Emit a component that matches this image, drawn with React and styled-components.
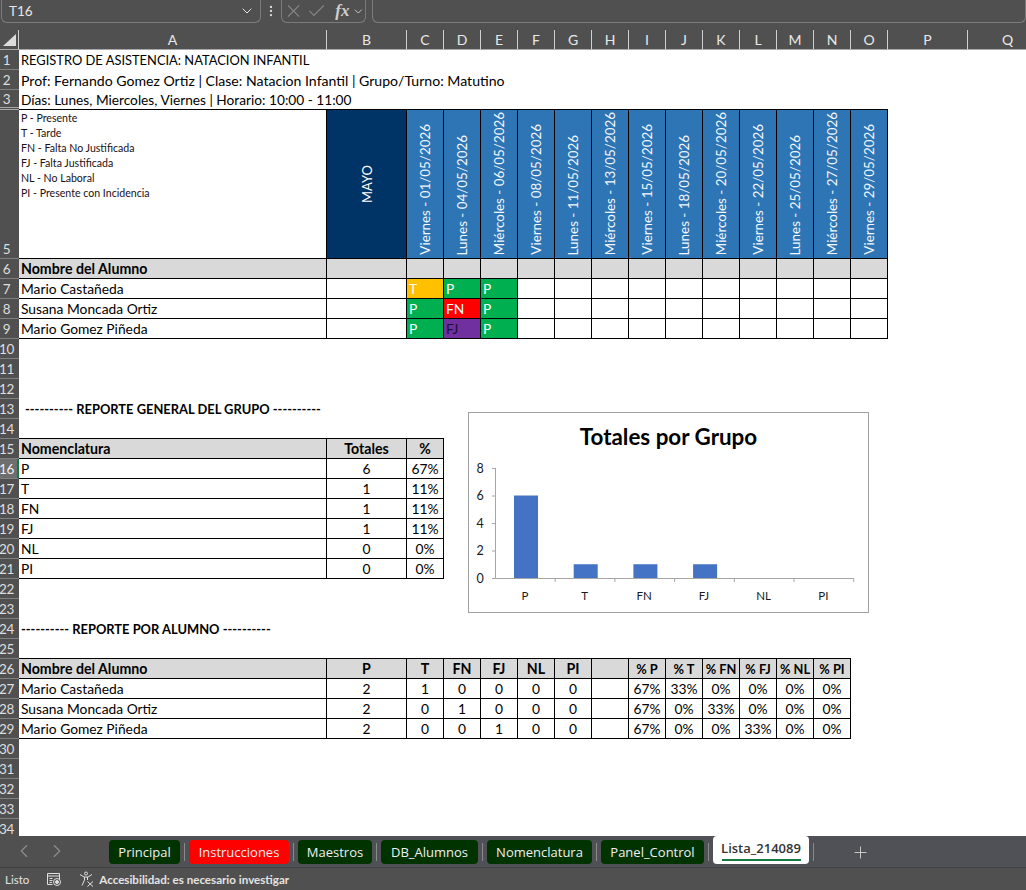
import { Fragment } from "react";
import styled, { createGlobalStyle } from "styled-components";
import { Check, ChevronDown, ChevronLeft, ChevronRight, EllipsisVertical, Plus, X } from "lucide-react";

const CELL_FONT = `"Lato", "Liberation Sans", sans-serif`;
const UI_FONT = `"Open Sans", "Noto Sans", sans-serif`;

const COLUMNS = [
  ["A", 308], ["B", 80], ["C", 37], ["D", 37], ["E", 37], ["F", 37], ["G", 37], ["H", 37], ["I", 37],
  ["J", 37], ["K", 37], ["L", 37], ["M", 37], ["N", 37], ["O", 37], ["P", 80], ["Q", 80],
];

const LEGEND = [
  "P - Presente",
  "T - Tarde",
  "FN - Falta No Justificada",
  "FJ - Falta Justificada",
  "NL - No Laboral",
  "PI - Presente con Incidencia",
];

const DATES = [
  "Viernes - 01/05/2026", "Lunes - 04/05/2026", "Miércoles - 06/05/2026", "Viernes - 08/05/2026",
  "Lunes - 11/05/2026", "Miércoles - 13/05/2026", "Viernes - 15/05/2026", "Lunes - 18/05/2026",
  "Miércoles - 20/05/2026", "Viernes - 22/05/2026", "Lunes - 25/05/2026", "Miércoles - 27/05/2026",
  "Viernes - 29/05/2026",
];

const ATTENDANCE = [
  ["Mario Castañeda", ["T", "P", "P"]],
  ["Susana Moncada Ortiz", ["P", "FN", "P"]],
  ["Mario Gomez Piñeda", ["P", "FJ", "P"]],
];

const MARK_COLORS = {
  T: { bg: "#ffc000", fg: "#ffffff" },
  P: { bg: "#00b050", fg: "#ffffff" },
  FN: { bg: "#ff0000", fg: "#ffffff" },
  FJ: { bg: "#7030a0", fg: "#1c1030" },
};

const TOTALS = [
  ["P", 6, "67%"],
  ["T", 1, "11%"],
  ["FN", 1, "11%"],
  ["FJ", 1, "11%"],
  ["NL", 0, "0%"],
  ["PI", 0, "0%"],
];

const STUDENT_HEAD = ["P", "T", "FN", "FJ", "NL", "PI", "", "% P", "% T", "% FN", "% FJ", "% NL", "% PI"];
const STUDENTS = [
  ["Mario Castañeda", [2, 1, 0, 0, 0, 0, "", "67%", "33%", "0%", "0%", "0%", "0%"]],
  ["Susana Moncada Ortiz", [2, 0, 1, 0, 0, 0, "", "67%", "0%", "33%", "0%", "0%", "0%"]],
  ["Mario Gomez Piñeda", [2, 0, 0, 1, 0, 0, "", "67%", "0%", "0%", "33%", "0%", "0%"]],
];

const TABS = [
  { name: "Principal", width: 71, color: "#003300" },
  { name: "Instrucciones", width: 100, color: "#ff0000" },
  { name: "Maestros", width: 74, color: "#003300" },
  { name: "DB_Alumnos", width: 97, color: "#003300" },
  { name: "Nomenclatura", width: 105, color: "#003300" },
  { name: "Panel_Control", width: 103, color: "#003300" },
  { name: "Lista_214089", width: 96, active: true },
];

const CHART = [
  { label: "P", value: 6 },
  { label: "T", value: 1 },
  { label: "FN", value: 1 },
  { label: "FJ", value: 1 },
  { label: "NL", value: 0 },
  { label: "PI", value: 0 },
];

const GlobalStyle = createGlobalStyle`
  html, body {
    margin: 0;
    padding: 0;
    background: #505050;
  }
  * {
    box-sizing: border-box;
  }
`;

const Window = styled.div`
  width: 1026px;
  height: 890px;
  display: flex;
  flex-direction: column;
  overflow: hidden;
  background: #505050;
  font-family: ${CELL_FONT};
`;

/* formula bar */
const FormulaBar = styled.div`
  flex: 0 0 30px;
  display: flex;
  align-items: flex-start;
  color: #e6e6e6;
`;

const BarBox = styled.div`
  height: 23px;
  width: ${(props) => props.$width || "auto"};
  flex: ${(props) => (props.$grow ? "1" : "0 0 auto")};
  margin-left: ${(props) => props.$left || 0}px;
  display: flex;
  align-items: center;
  border: 1px solid #7c7c7c;
  border-top: none;
  border-radius: 0 0 6px 6px;
`;

const NameValue = styled.span`
  flex: 1;
  padding-left: 7px;
  font-size: 13.5px;
`;

const NameChevron = styled(ChevronDown)`
  margin-right: 5px;
`;

const BarDots = styled.div`
  width: 20px;
  height: 21px;
  display: flex;
  align-items: center;
  justify-content: center;
  color: #d8d8d8;
`;

const CancelIcon = styled(X)`
  margin-left: 1px;
  color: #8c8c8c;
`;

const ConfirmIcon = styled(Check)`
  margin-left: 2px;
  color: #8c8c8c;
`;

const FxMark = styled.span`
  font-family: "Liberation Serif", serif;
  font-style: italic;
  font-weight: bold;
  font-size: 17px;
  color: #cfcfcf;
  margin-left: 8px;
  margin-right: 3px;
`;

/* sheet grid */
const RowGrid = styled.div`
  display: grid;
  grid-template-columns: 19px ${COLUMNS.map((c) => `${c[1]}px`).join(" ")};
  grid-auto-rows: ${(props) => props.$height}px;
  height: ${(props) => props.$height}px;
  flex: 0 0 auto;
`;

const Corner = styled.div`
  border-right: 1px solid #cfcfcf;
  border-bottom: 1px solid #a8a8a8;
`;

const CornerMark = styled.svg`
  display: block;
`;

const ColumnHead = styled.div`
  display: flex;
  align-items: center;
  justify-content: center;
  color: #e8e8e8;
  font-size: 14px;
  border-right: 1px solid #cfcfcf;
  border-bottom: 1px solid #a8a8a8;
`;

const Sheet = styled.div`
  position: relative;
  flex: 1 1 0;
  min-height: 0;
  overflow: hidden;
  background: #ffffff;
`;

const RowHead = styled.div`
  display: flex;
  align-items: ${(props) => (props.$tall ? "flex-end" : "center")};
  justify-content: center;
  padding-right: ${(props) => (props.$selected ? 4 : 6)}px;
  padding-bottom: ${(props) => (props.$tall ? "1px" : "0")};
  background: ${(props) => (props.$selected ? "#6e6e6e" : "#505050")};
  color: ${(props) => (props.$selected ? "#f0f0f0" : "#dedede")};
  font-size: 13.5px;
  letter-spacing: -0.4px;
  white-space: nowrap;
  border-bottom: ${(props) => (props.$hiddenNext ? "3px double #a8a8a8" : "1px solid #808080")};
  border-right: ${(props) => (props.$selected ? "2px solid #107c41" : "0")};
`;

const Cell = styled.div`
  display: flex;
  align-items: center;
  justify-content: ${(props) => (props.$center ? "center" : "flex-start")};
  padding-left: ${(props) => (props.$center ? 0 : 2)}px;
  font-size: ${(props) => props.$size || (props.$bold ? 14.2 : 13.8)}px;
  font-weight: ${(props) => (props.$bold ? 700 : 400)};
  color: ${(props) => props.$color || "#000000"};
  background: ${(props) => props.$bg || "transparent"};
  white-space: nowrap;
  min-width: 0;
  border-right: ${(props) => (props.$box ? "1px solid #000" : "0")};
  border-bottom: ${(props) => (props.$box || props.$edge ? "1px solid #000" : "0")};
`;

const ReportTitle = styled(Cell)`
  padding-left: ${(props) => props.$indent}px;
  font-size: 12.9px;
  font-weight: 700;
`;

const LegendCell = styled.div`
  padding: 1px 0 0 2px;
  font-size: 10.6px;
  line-height: 15px;
  color: #1a1016;
  border-right: 1px solid #000;
  border-bottom: 1px solid #000;
`;

const LegendLine = styled.div`
  white-space: nowrap;
`;

const MonthCell = styled.div`
  display: flex;
  align-items: center;
  justify-content: center;
  background: #003366;
  color: #ffffff;
  font-size: 13px;
  border-right: 1px solid #000;
  border-bottom: 1px solid #000;
`;

const DateCell = styled.div`
  display: flex;
  align-items: center;
  justify-content: flex-start;
  flex-direction: column-reverse;
  padding-bottom: 3px;
  background: #2e75b6;
  color: #f4f8fc;
  font-size: 13.4px;
  border-right: 1px solid #000;
  border-bottom: 1px solid #000;
`;

const Rotated = styled.span`
  writing-mode: vertical-rl;
  transform: rotate(180deg);
  white-space: nowrap;
`;

/* chart */
const ChartPanel = styled.div`
  position: absolute;
  left: 468px;
  top: 362px;
  width: 401px;
  height: 201px;
  display: flex;
  flex-direction: column;
  background: #ffffff;
  border: 1px solid #a0a0a0;
`;

const ChartTitle = styled.div`
  flex: 0 0 46px;
  display: flex;
  align-items: center;
  justify-content: center;
  font-size: 22.4px;
  font-weight: 700;
  color: #000000;
`;

const AxisLabel = styled.text`
  font-family: ${CELL_FONT};
  font-size: ${(props) => props.$size}px;
  fill: #1a1a1a;
`;

/* sheet tabs */
const TabBar = styled.div`
  flex: 0 0 32px;
  display: flex;
  align-items: flex-start;
  background: #505157;
  border-bottom: 1px solid #404040;
`;

const TabNav = styled.div`
  flex: 0 0 109px;
  height: 31px;
  display: flex;
  align-items: center;
  gap: 11px;
  padding: 0 0 2px 13px;
  color: #8e8e8e;
  background: #505050;
`;

const TabList = styled.div`
  display: flex;
  align-items: flex-start;
  padding-top: 4px;
`;

const Tab = styled.div`
  width: ${(props) => props.$width}px;
  height: ${(props) => (props.$active ? 28 : 24)}px;
  margin-top: ${(props) => (props.$active ? -4 : 0)}px;
  position: relative;
  display: flex;
  align-items: ${(props) => (props.$active ? "flex-start" : "center")};
  justify-content: center;
  padding-top: ${(props) => (props.$active ? 3 : 0)}px;
  border-radius: 4px;
  background: ${(props) => (props.$active ? "#ffffff" : props.$color)};
  color: ${(props) => (props.$active ? "#333333" : "#f0f0f0")};
  font-family: ${UI_FONT};
  font-size: 13px;
  font-weight: ${(props) => (props.$active ? 600 : 400)};
  white-space: nowrap;
`;

const TabUnderline = styled.span`
  position: absolute;
  left: 9px;
  right: 8px;
  bottom: 3px;
  height: 2px;
  background: #107c41;
`;

const TabDivider = styled.div`
  width: 1px;
  height: 18px;
  margin: 3px 4px 0;
  background: #8a8a8a;
`;

const AddSheet = styled.div`
  margin-left: 33px;
  height: 24px;
  display: flex;
  align-items: center;
  color: #d8d8d8;
`;

/* status bar */
const StatusBar = styled.div`
  flex: 0 0 22px;
  display: flex;
  align-items: center;
  padding-left: 5px;
  color: #e4e4e4;
  font-family: ${CELL_FONT};
  font-size: 11.5px;
`;

const StatusIcon = styled.span`
  display: flex;
  margin-left: ${(props) => props.$left}px;
`;

const StatusStrong = styled.span`
  margin-left: 4px;
  font-weight: 700;
  font-size: 11.6px;
`;

function SheetRow({ n, height = 20, selected, hiddenNext, tall, children }) {
  return (
    <RowGrid $height={height}>
      <RowHead $selected={selected} $hiddenNext={hiddenNext} $tall={tall}>{n}</RowHead>
      {children}
    </RowGrid>
  );
}

function blanks(from, to) {
  const rows = [];
  for (let n = from; n <= to; n++) rows.push(<SheetRow key={n} n={n} />);
  return rows;
}

function edges(count) {
  return Array.from({ length: count }, (_, i) => <Cell key={i} $edge />);
}

function MacroIcon() {
  return (
    <svg width="16" height="16" viewBox="0 0 16 16" fill="none" stroke="#e0e0e0" strokeWidth="1">
      <path d="M1.5 2.5h12v6M1.5 2.5v11h5M1.5 5h12" />
      <path d="M3.5 7.5h3M3.5 9.5h3M3.5 11.5h2.5" />
      <circle cx="11" cy="11" r="3.5" />
      <circle cx="11" cy="11" r="1.5" fill="#e0e0e0" />
    </svg>
  );
}

function AccessibilityIcon() {
  return (
    <svg width="16" height="16" viewBox="0 0 16 16" fill="none" stroke="#e0e0e0" strokeWidth="1">
      <circle cx="7" cy="2.5" r="1.5" />
      <path d="M1 3.5l4 2.500h4l4-2.500M5.500 6v3L3 14.500M8.500 6v3" />
      <path d="M8.500 10.500l5.500 5M14 10.500l-5.500 5" />
    </svg>
  );
}

function TotalsChart() {
  const baseY = 578;
  const topY = 468;
  const left = 495;
  const slot = 59.7;
  const unit = (baseY - topY) / 8;
  return (
    <ChartPanel>
      <ChartTitle>Totales por Grupo</ChartTitle>
      <svg width="399" height="153" viewBox="469 459 399 153">
        {[0, 2, 4, 6, 8].map((v) => (
          <g key={v}>
            <line x1={left - 3} x2={left} y1={baseY - v * unit + 0.5} y2={baseY - v * unit + 0.5} stroke="#a6a6a6" />
            <AxisLabel $size={12.5} x={480} y={baseY - v * unit + 4.5} textAnchor="middle">{v}</AxisLabel>
          </g>
        ))}
        <line x1={left + 0.5} x2={left + 0.5} y1={topY} y2={baseY} stroke="#a6a6a6" />
        <line x1={left} x2={left + slot * 6} y1={baseY + 0.5} y2={baseY + 0.5} stroke="#a6a6a6" />
        {CHART.map((d, i) => (
          <g key={d.label}>
            <line x1={left + slot * (i + 1) + 0.5} x2={left + slot * (i + 1) + 0.5} y1={baseY} y2={baseY + 4} stroke="#a6a6a6" />
            {d.value > 0 && (
              <rect x={left + 19 + slot * i} y={baseY - d.value * unit} width="24" height={d.value * unit} fill="#4472c4" />
            )}
            <AxisLabel $size={11.5} x={left + slot * (i + 0.5)} y={600} textAnchor="middle">{d.label}</AxisLabel>
          </g>
        ))}
      </svg>
    </ChartPanel>
  );
}

export default function App() {
  return (
    <Window>
      <GlobalStyle />
      <FormulaBar>
        <BarBox $width="260px" $left={1}>
          <NameValue>T16</NameValue>
          <NameChevron size={16} strokeWidth={1.5} />
        </BarBox>
        <BarDots><EllipsisVertical size={14} strokeWidth={2} /></BarDots>
        <BarBox $width="85px">
          <CancelIcon size={22} strokeWidth={1.2} />
          <ConfirmIcon size={22} strokeWidth={1.2} />
          <FxMark>fx</FxMark>
          <ChevronDown size={13} strokeWidth={1.5} />
        </BarBox>
        <BarBox $grow $left={6} />
      </FormulaBar>

      <RowGrid $height={20}>
        <Corner>
          <CornerMark width="18" height="19" viewBox="0 0 18 19">
            <polygon points="3,16 16,16 16,4" fill="#dcdcdc" />
          </CornerMark>
        </Corner>
        {COLUMNS.map((c) => (
          <ColumnHead key={c[0]}>{c[0]}</ColumnHead>
        ))}
      </RowGrid>

      <Sheet>
        <SheetRow n={1}>
          <Cell $size={12.9}>REGISTRO DE ASISTENCIA: NATACION INFANTIL</Cell>
        </SheetRow>
        <SheetRow n={2}>
          <Cell $size={14.1}>Prof: Fernando Gomez Ortiz | Clase: Natacion Infantil | Grupo/Turno: Matutino</Cell>
        </SheetRow>
        <SheetRow n={3} hiddenNext>
          <Cell $edge $size={13.7}>Días: Lunes, Miercoles, Viernes | Horario: 10:00 - 11:00</Cell>
          {edges(14)}
        </SheetRow>
        <SheetRow n={5} height={149} tall>
          <LegendCell>
            {LEGEND.map((line) => (
              <LegendLine key={line}>{line}</LegendLine>
            ))}
          </LegendCell>
          <MonthCell><Rotated>MAYO</Rotated></MonthCell>
          {DATES.map((d) => (
            <DateCell key={d}><Rotated>{d}</Rotated></DateCell>
          ))}
        </SheetRow>
        <SheetRow n={6}>
          <Cell $box $bold $bg="#d9d9d9">Nombre del Alumno</Cell>
          <Cell $box $bg="#d9d9d9" />
          {DATES.map((d) => (
            <Cell key={d} $box $bg="#d9d9d9" />
          ))}
        </SheetRow>
        {ATTENDANCE.map(([name, marks], r) => (
          <SheetRow key={name} n={7 + r}>
            <Cell $box>{name}</Cell>
            <Cell $box />
            {DATES.map((d, i) => {
              const mark = marks[i];
              const tone = MARK_COLORS[mark];
              return (
                <Cell key={d} $box $bg={tone && tone.bg} $color={tone && tone.fg}>{mark}</Cell>
              );
            })}
          </SheetRow>
        ))}
        {blanks(10, 12)}
        <SheetRow n={13}>
          <ReportTitle $indent={6}>---------- REPORTE GENERAL DEL GRUPO ----------</ReportTitle>
        </SheetRow>
        <SheetRow n={14}>{edges(3)}</SheetRow>
        <SheetRow n={15}>
          <Cell $box $bold $bg="#d9d9d9">Nomenclatura</Cell>
          <Cell $box $bold $center $bg="#d9d9d9">Totales</Cell>
          <Cell $box $bold $center $bg="#d9d9d9">%</Cell>
        </SheetRow>
        {TOTALS.map(([code, total, pct], r) => (
          <SheetRow key={code} n={16 + r} selected={r === 0}>
            <Cell $box>{code}</Cell>
            <Cell $box $center>{total}</Cell>
            <Cell $box $center>{pct}</Cell>
          </SheetRow>
        ))}
        {blanks(22, 23)}
        <SheetRow n={24}>
          <ReportTitle $indent={2}>---------- REPORTE POR ALUMNO ----------</ReportTitle>
        </SheetRow>
        <SheetRow n={25}>{edges(14)}</SheetRow>
        <SheetRow n={26}>
          <Cell $box $bold $bg="#d9d9d9">Nombre del Alumno</Cell>
          {STUDENT_HEAD.map((h, i) => (
            <Cell key={i} $box $bold $center $bg="#d9d9d9" $size={i > 6 ? 12.8 : 14.2}>{h}</Cell>
          ))}
        </SheetRow>
        {STUDENTS.map(([name, values], r) => (
          <SheetRow key={name} n={27 + r}>
            <Cell $box>{name}</Cell>
            {values.map((v, i) => (
              <Cell key={i} $box $center>{v}</Cell>
            ))}
          </SheetRow>
        ))}
        {blanks(30, 34)}
        <TotalsChart />
      </Sheet>

      <TabBar>
        <TabNav>
          <ChevronLeft size={22} strokeWidth={1.25} />
          <ChevronRight size={22} strokeWidth={1.25} />
        </TabNav>
        <TabList>
          {TABS.map((t) => (
            <Fragment key={t.name}>
              <Tab $width={t.width} $color={t.color} $active={t.active}>
                {t.name}
                {t.active && <TabUnderline />}
              </Tab>
              <TabDivider />
            </Fragment>
          ))}
          <AddSheet><Plus size={19} strokeWidth={1.1} /></AddSheet>
        </TabList>
      </TabBar>
      <StatusBar>
        Listo
        <StatusIcon $left={17}><MacroIcon /></StatusIcon>
        <StatusIcon $left={17}><AccessibilityIcon /></StatusIcon>
        <StatusStrong>Accesibilidad: es necesario investigar</StatusStrong>
      </StatusBar>
    </Window>
  );
}
